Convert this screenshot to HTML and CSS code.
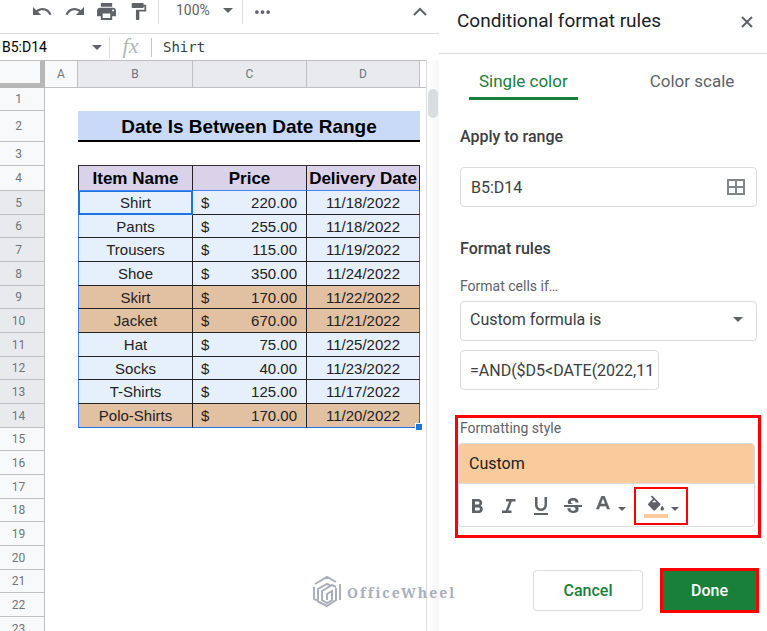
FILE: index.html
```html
<!DOCTYPE html>
<html lang="en">
<head>
<meta charset="utf-8">
<title>Conditional format rules</title>
<link rel="stylesheet" href="styles.css">
</head>
<body>
<main class="sheet">
  <div class="toolbar">
    <button class="tool" aria-label="Undo"><svg viewBox="2 3 21 18"><path d="M12.500 8c-2.650 0-5.050.990-6.900 2.600L2 7v9h9l-3.620-3.620c1.390-1.160 3.160-1.880 5.120-1.880 3.540 0 6.550 2.310 7.600 5.500l2.370-.780C21.080 11.030 17.150 8 12.500 8z"/></svg></button>
    <button class="tool" aria-label="Redo"><svg viewBox="1 3 21 18"><path d="M18.400 10.600C16.550 8.990 14.150 8 11.500 8c-4.650 0-8.580 3.030-9.960 7.220L3.900 16c1.050-3.190 4.050-5.500 7.600-5.500 1.950 0 3.730.720 5.120 1.880L13 16h9V7l-3.600 3.600z"/></svg></button>
    <button class="tool" aria-label="Print"><svg viewBox="2 3 20 18"><path d="M19 8H5c-1.660 0-3 1.340-3 3v6h4v4h12v-4h4v-6c0-1.660-1.340-3-3-3zm-3 11H8v-5h8v5zm3-7c-.550 0-1-.450-1-1s.450-1 1-1 1 .450 1 1-.450 1-1 1zm-1-9H6v4h12V3z"/></svg></button>
    <button class="tool" aria-label="Paint format"><svg viewBox="2 2 20 20"><path d="M18 4V3c0-.550-.450-1-1-1H5c-.550 0-1 .450-1 1v4c0 .550.450 1 1 1h12c.550 0 1-.450 1-1V6h1v4H9v11c0 .550.450 1 1 1h2c.550 0 1-.450 1-1v-9h8V4h-3z"/></svg></button>
    <span class="divider"></span>
    <button class="zoom">100%<span class="caret"></span></button>
    <span class="divider"></span>
    <button class="more" aria-label="More"><svg viewBox="0 0 16 4"><circle cx="2" cy="2" r="2"/><circle cx="8" cy="2" r="2"/><circle cx="14" cy="2" r="2"/></svg></button>
    <button class="collapse" aria-label="Hide menus"><svg viewBox="0 0 14 9"><path d="M1 8l6-6 6 6"/></svg></button>
  </div>
  <div class="formula-bar">
    <button class="name-box">B5:D14<span class="caret"></span></button>
    <span class="fx">fx</span>
    <input class="formula-text" aria-label="Formula" value="Shirt">
  </div>
  <div class="grid-area">
    <div class="grid-scroll">
    <table class="grid">
      <colgroup><col class="col-num"><col class="col-a"><col class="col-b"><col class="col-c"><col class="col-d"><col></colgroup>
      <thead>
        <tr><td class="corner"></td><th>A</th><th class="on">B</th><th class="on">C</th><th class="on">D</th><th></th></tr>
      </thead>
      <tbody>
        <tr class="r1"><th>1</th></tr>
        <tr class="r2"><th>2</th><td></td><td class="title" colspan="3">Date Is Between Date Range</td></tr>
        <tr class="r3"><th>3</th><td></td><td></td><td></td><td></td></tr>
        <tr class="r4"><th>4</th><td></td><td>Item Name</td><td>Price</td><td>Delivery Date</td></tr>
        <tr class="data"><th>5</th><td></td><td class="active">Shirt</td><td><span class="money"><span>$</span><span>220.00</span></span></td><td>11/18/2022</td></tr>
        <tr class="data"><th>6</th><td></td><td>Pants</td><td><span class="money"><span>$</span><span>255.00</span></span></td><td>11/18/2022</td></tr>
        <tr class="data"><th>7</th><td></td><td>Trousers</td><td><span class="money"><span>$</span><span>115.00</span></span></td><td>11/19/2022</td></tr>
        <tr class="data"><th>8</th><td></td><td>Shoe</td><td><span class="money"><span>$</span><span>350.00</span></span></td><td>11/24/2022</td></tr>
        <tr class="data match"><th>9</th><td></td><td>Skirt</td><td><span class="money"><span>$</span><span>170.00</span></span></td><td>11/22/2022</td></tr>
        <tr class="data match"><th>10</th><td></td><td>Jacket</td><td><span class="money"><span>$</span><span>670.00</span></span></td><td>11/21/2022</td></tr>
        <tr class="data"><th>11</th><td></td><td>Hat</td><td><span class="money"><span>$</span><span>75.00</span></span></td><td>11/25/2022</td></tr>
        <tr class="data"><th>12</th><td></td><td>Socks</td><td><span class="money"><span>$</span><span>40.00</span></span></td><td>11/23/2022</td></tr>
        <tr class="data"><th>13</th><td></td><td>T-Shirts</td><td><span class="money"><span>$</span><span>125.00</span></span></td><td>11/17/2022</td></tr>
        <tr class="data match last"><th>14</th><td></td><td>Polo-Shirts</td><td><span class="money"><span>$</span><span>170.00</span></span></td><td>11/20/2022<span class="handle"></span></td></tr>
        <tr><th>15</th></tr>
        <tr><th>16</th></tr>
        <tr><th>17</th></tr>
        <tr><th>18</th></tr>
        <tr><th>19</th></tr>
        <tr><th>20</th></tr>
        <tr><th>21</th></tr>
        <tr><th>22</th></tr>
        <tr><th>23</th></tr>
      </tbody>
    </table>
    </div>
    <div class="scrollbar"><div class="thumb"></div></div>
  </div>
  <div class="watermark">
    <svg viewBox="0 0 30 34"><path d="M3 9L15 2l9 5M2 12v12l4 2V14l9-5 4 2M28 9v16M24 13v12l-9 6-10-5M24 12l-4-2-10 6v9l5 3 5-3v-9l-5 3v6"/></svg>
    <span>OfficeWheel</span>
  </div>
</main>
<aside class="panel">
  <header class="panel-head">
    <h1>Conditional format rules</h1>
    <button class="close" aria-label="Close"><svg viewBox="0 0 12 12"><path d="M1 1l10 10M11 1L1 11"/></svg></button>
  </header>
  <nav class="tabs">
    <button class="tab selected">Single color</button>
    <button class="tab">Color scale</button>
  </nav>
  <form class="rules">
    <label class="heading" for="range">Apply to range</label>
    <div class="field">
      <input id="range" value="B5:D14">
      <svg class="grid-icon" viewBox="0 0 18 16"><path d="M1 1h16v14H1zM9 1v14M1 8h16"/></svg>
    </div>
    <h2 class="heading">Format rules</h2>
    <label class="caption" for="condition">Format cells if…</label>
    <div class="field select">
      <select id="condition"><option>Custom formula is</option></select>
      <span class="caret"></span>
    </div>
    <div class="field formula">
      <input aria-label="Value or formula" value="=AND($D5&lt;DATE(2022,11">
    </div>
    <section class="style-box">
      <h3 class="caption">Formatting style</h3>
      <div class="style-card">
        <div class="preview">Custom</div>
        <div class="style-tools">
          <button type="button" aria-label="Bold"><svg viewBox="2 1 20 20"><path d="M15.600 10.790c.970-.670 1.650-1.770 1.650-2.790 0-2.260-1.750-4-4-4H7v14h7.040c2.090 0 3.710-1.700 3.710-3.790 0-1.520-.860-2.820-2.150-3.420zM10 6.500h3c.830 0 1.500.670 1.500 1.500s-.670 1.500-1.500 1.500h-3v-3zm3.500 9H10v-3h3.500c.830 0 1.500.670 1.500 1.500s-.670 1.500-1.500 1.500z"/></svg></button>
          <button type="button" aria-label="Italic"><svg viewBox="2 1 20 20"><path d="M9 4v2.500h3.200l-3.500 9H5V18h9.500v-2.500h-3.200l3.500-9H18.500V4z"/></svg></button>
          <button type="button" aria-label="Underline"><svg viewBox="2 2 20 20"><path d="M12 17c3.310 0 6-2.690 6-6V3h-2.500v8c0 1.930-1.570 3.500-3.500 3.500S8.500 12.930 8.500 11V3H6v8c0 3.310 2.690 6 6 6zm-7 2v2h14v-2H5z"/></svg></button>
          <button type="button" aria-label="Strikethrough"><svg viewBox="2 1 20 20"><path d="M6.850 7.080C6.850 4.370 9.450 3 12.240 3c1.640 0 3 .490 3.900 1.280.770.650 1.460 1.730 1.460 3.240h-3.010c0-.310-.050-.590-.150-.850-.290-.860-1.200-1.280-2.250-1.280-1.860 0-2.340 1.020-2.340 1.700 0 .480.250.880.740 1.210.380.250.770.480 1.410.700H7.390c-.210-.340-.540-.890-.540-1.920zM21 12v-2H3v2h9.620c1.150.450 1.960.750 1.960 1.970 0 1-.810 1.670-2.280 1.670-1.540 0-2.930-.540-2.930-2.510H6.400c0 .550.080 1.130.240 1.580.810 2.290 3.290 3.300 5.670 3.300 2.270 0 5.300-.890 5.300-4.050 0-.300-.010-1.160-.480-1.940H21V12z"/></svg></button>
          <button type="button" class="text-color" aria-label="Text color"><svg viewBox="2 4 20 20"><path stroke="#5f6368" stroke-width=".6" d="M11 3L5.500 17h2.250l1.120-3h6.250l1.120 3h2.250L13 3h-2zm-1.380 9L12 5.670 14.380 12H9.620z"/></svg><span class="caret"></span></button>
          <button type="button" class="fill-color" aria-label="Fill color"><span class="fill-icon"><svg viewBox="3 0 18 17"><path fill-rule="evenodd" d="M16.560 8.940L7.620 0 6.210 1.410l2.380 2.380-5.150 5.150c-.590.590-.590 1.540 0 2.120l5.500 5.500c.290.290.680.440 1.060.440s.770-.150 1.060-.440l5.500-5.500c.590-.580.590-1.530 0-2.120zM7.500 7.700L10 5.200l2.500 2.500zM19 11.500s-2 2.170-2 3.500c0 1.100.9 2 2 2s2-.9 2-2c0-1.330-2-3.500-2-3.500z"/></svg><span class="swatch"></span></span><span class="caret"></span></button>
        </div>
      </div>
    </section>
    <div class="actions">
      <button type="button" class="cancel">Cancel</button>
      <button type="button" class="done">Done</button>
    </div>
  </form>
</aside>
</body>
</html>
```
FILE: styles.css
```css
* { box-sizing: border-box; }
body {
  margin: 0;
  display: flex;
  height: 100vh;
  overflow: hidden;
  background: #fff;
  color: #202124;
  font-family: Roboto, "Liberation Sans", sans-serif;
}
button, input, select { font: inherit; color: inherit; background: none; border: 0; padding: 0; margin: 0; }
svg { display: block; fill: #5f6368; }
h1, h2, h3 { margin: 0; font-weight: 400; }
.caret { border: 5px solid transparent; border-top-color: #5f6368; border-bottom: 0; flex: none; }

/* Spreadsheet */
.sheet { flex: 1; min-width: 0; display: flex; flex-direction: column; position: relative; z-index: 1; }
.toolbar {
  display: flex;
  align-items: center;
  height: 34px;
  padding: 0 12px 10px 33px;
  border-bottom: 1px solid #dadce0;
}
.tool { margin-right: 13px; }
.tool svg { width: 19px; height: 17px; }
.tool + .divider { margin-left: -3px; }
.divider { width: 1px; height: 24px; background: #dadce0; }
.zoom { display: flex; align-items: center; gap: 13px; margin: 0 9px 0 17px; padding-bottom: 3px; font-size: 14px; color: #5f6368; }
.more { margin-left: 12px; }
.more svg { width: 15px; height: 4px; }
.collapse { margin-left: auto; }
.collapse svg { width: 14px; height: 9px; fill: none; stroke: #5f6368; stroke-width: 2; }
.formula-bar { display: flex; align-items: center; height: 26px; }
.name-box {
  display: flex;
  align-items: center;
  justify-content: space-between;
  width: 110px;
  height: 21px;
  padding: 0 7px 0 2px;
  border-right: 1px solid #dadce0;
  font-size: 14px;
  color: #000;
}
.fx {
  width: 42px;
  height: 19px;
  border-right: 1px solid #c4c7cb;
  text-align: center;
  font: italic 22px/16px "Liberation Serif", serif;
  color: #b4b6b9;
}
.formula-text { flex: 1; min-width: 0; padding-left: 11px; font: 14px "DejaVu Sans Mono", monospace; color: #3c4043; }

.grid-area { flex: 1; min-height: 0; display: flex; }
.grid-scroll { flex: 1; min-width: 0; overflow: hidden; }
.grid { width: 100%; table-layout: fixed; border-collapse: separate; border-spacing: 0; }
.grid th, .grid td { padding: 0; text-align: center; line-height: 1; }
.col-num { width: 45px; }
.col-a { width: 33px; }
.col-b { width: 115px; }
.col-c { width: 114px; }
.col-d { width: 113px; }
.grid th { font-size: 12px; font-weight: 400; color: #70757a; background: #f8f9fa; border-right: 1px solid #c0c0c0; border-bottom: 1px solid #c0c0c0; }
.grid thead th, .corner { height: 28px; border-top: 1px solid #c0c0c0; }
.grid thead th:last-child { background: #fff; border-right: 0; }
.corner { background: #f8f9fa; border-right: 5px solid #b7b7b7; border-bottom: 5px solid #b7b7b7; }
.grid .on, .grid .data th { background: #e8eaed; }
.grid tbody th { padding-right: 7px; }
.grid tbody tr { height: 24px; }
.grid tbody tr:nth-child(3n+6) { height: 23px; }
.grid .r1 { height: 23px; }
.grid .r2 { height: 31px; }
.grid .r4 { height: 25px; }
.grid .title { padding-top: 1px; background: #c9daf8; border-bottom: 2px solid #000; font: bold 19px/1 "Liberation Sans", Arial, sans-serif; color: #000; }
.r3 td:nth-child(n+3) { border-bottom: 1px solid #333; }
.r4 td:nth-child(n+3) { background: #d9d2e9; border-right: 1px solid #222; border-bottom: 1px solid #4285f4; font: bold 17px/1 "Liberation Sans", Arial, sans-serif; color: #000; white-space: nowrap; }
.r4 td:nth-child(3) { border-left: 1px solid #222; }
.grid .data td:nth-child(n+3) { position: relative; background: #e6f0fd; border-right: 1px solid #222; border-bottom: 1px solid #222; font: 15px/1 "Liberation Sans", Arial, sans-serif; color: #222; }
.grid .data td:nth-child(3) { border-left: 1px solid #4285f4; }
.grid .data td:nth-child(5) { border-right-color: #1a73e8; }
.grid .match td:nth-child(n+3) { background: #e2c0a2; }
.grid .last td:nth-child(n+3) { border-bottom-color: #1a73e8; }
.grid .data td.active:nth-child(3) { box-shadow: inset 0 0 0 1px #1a73e8; border-color: #1a73e8; }
.money { display: flex; justify-content: space-between; padding: 0 9px 0 8px; }
.handle { position: absolute; right: -4px; bottom: -4px; width: 8px; height: 8px; background: #1a73e8; border: 1px solid #fff; }
.scrollbar { width: 13px; padding: 29px 1px 0; border-left: 1px solid #dadce0; background: linear-gradient(90deg, #fff, #f6f6f6); }
.thumb { height: 29px; border-radius: 5px; background: #dadce0; }

.watermark { position: absolute; left: 312px; bottom: 22px; display: flex; align-items: center; gap: 5px; font: bold 14px "Noto Serif", "Liberation Serif", serif; letter-spacing: 2px; color: #a9afbb; }
.watermark svg { width: 30px; height: 34px; fill: none; stroke: #a9afbb; stroke-width: 2; }

/* Side panel */
.panel { flex: 0 0 328px; min-width: 0; background: #fff; }
.panel-head { display: flex; align-items: center; justify-content: space-between; height: 54px; padding: 0 14px 12px 18px; border-bottom: 1px solid #dadce0; }
.panel-head h1 { font-size: 19px; }
.close { padding-top: 3px; }
.close svg { width: 12px; height: 12px; fill: none; stroke: #5f6368; stroke-width: 2; }
.tabs { display: flex; gap: 62px; padding: 11px 20px 0 30px; }
.tab { height: 35px; padding: 0 10px; font-size: 17px; color: #5f6368; border-bottom: 3px solid transparent; white-space: nowrap; }
.selected { color: #188038; border-color: #188038; border-radius: 3px 3px 0 0; }
.rules { padding: 26px 6px 0 16px; }
.heading { display: block; margin-left: 5px; font-size: 16px; font-weight: 500; line-height: 22px; color: #3c4043; }
.caption { display: block; margin-left: 5px; font-size: 14px; line-height: 20px; color: #5f6368; }
.field { display: flex; align-items: center; height: 40px; margin: 0 4px 0 5px; padding: 0 11px 0 10px; border: 1px solid #dadce0; border-radius: 4px; font-size: 16px; color: #3c4043; }
.field input, .field select { flex: 1; min-width: 0; width: 100%; appearance: none; }
.heading + .field { margin-top: 19px; }
.field + .heading { margin-top: 31px; }
.heading + .caption { margin-top: 16px; }
.caption + .field { margin-top: 5px; }
.select { padding: 0 13px 3px 9px; }
.grid-icon { width: 18px; height: 16px; fill: none; stroke: #80868b; stroke-width: 2; }
.field.formula { width: 199px; margin-top: 9px; padding: 0 6px 0 9px; }
.style-box { margin-top: 25px; padding: 0 3px 8px 0; border: 3px solid #f00; }
.style-box .caption { margin-left: 2px; }
.style-card { margin-top: 5px; border: 1px solid #dadce0; border-radius: 4px; overflow: hidden; }
.preview { height: 40px; padding-left: 10px; background: #f9cb9c; border-bottom: 1px solid #dadce0; font-size: 16px; line-height: 39px; }
.style-tools { display: flex; align-items: center; height: 42px; padding: 2px 0 0 8px; gap: 12px; }
.style-tools svg { width: 20px; height: 20px; }
.style-tools button { display: flex; align-items: center; }
.style-tools .caret { margin-top: 5px; border-width: 4px; border-bottom: 0; }
.style-tools .text-color { gap: 5px; margin-left: -2px; }
.style-tools .fill-color { width: 54px; height: 38px; margin-left: -4px; padding-left: 8px; gap: 3px; border: 2px solid #f00; }
.style-tools .fill-icon svg { width: 16px; height: 16px; margin: 0 auto; }
.swatch { display: block; width: 24px; height: 4px; margin-top: 3px; background: #f9cb9c; }
.actions { display: flex; justify-content: flex-end; align-items: center; gap: 17px; margin: 30px 2px 0 0; }
.actions button { padding-bottom: 1px; font-size: 16px; font-weight: 500; }
.cancel { width: 110px; height: 41px; border: 1px solid #dadce0; border-radius: 4px; color: #188038; }
.actions .done { width: 99px; height: 45px; border: 3px solid #f00; background: #188038; color: #fff; }
```
